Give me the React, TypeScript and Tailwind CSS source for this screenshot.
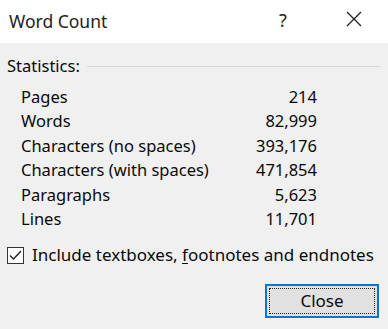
import React from "react";

const rows: [string, string][] = [
  ["Pages", "214"],
  ["Words", "82,999"],
  ["Characters (no spaces)", "393,176"],
  ["Characters (with spaces)", "471,854"],
  ["Paragraphs", "5,623"],
  ["Lines", "11,701"],
];

export default function App() {
  return (
    <div
      className="w-[388px] h-[329px] flex flex-col bg-[#f0f0f0] text-[#0a0a0a] overflow-hidden"
      style={{ fontFamily: '"Noto Sans", "Open Sans", sans-serif' }}
    >
      <div className="h-[43px] bg-white flex items-center relative shrink-0">
        <span className="ml-[9px] text-[17.5px] text-[#222]">Word Count</span>
        <span className="absolute left-[279px] top-[7px] text-[18px] text-[#222]">?</span>
        <svg className="absolute left-[346px] top-[11px]" width="16" height="16" viewBox="0 0 16 16">
          <path d="M1 1 L15 15 M15 1 L1 15" stroke="#222" strokeWidth="1.3" fill="none" />
        </svg>
      </div>
      <div className="flex flex-col">
        <div className="flex items-center h-[20px] mt-[13px] pl-[7px] pr-[8px]">
          <span className="text-[16.5px]">Statistics:</span>
          <div className="flex-1 h-px bg-[#d7d7d7] ml-[7px] mt-[1px]" />
        </div>
        <div className="flex flex-col mt-[9px] pl-[21px] w-[317px]">
          {rows.map(([k, v]) => (
            <div key={k} className="flex justify-between h-[24.5px] items-center text-[16.5px]">
              <span>{k}</span>
              <span>{v}</span>
            </div>
          ))}
        </div>
        <div className="flex items-center h-[24px] mt-[11px] pl-[7px]">
          <div className="w-[17px] h-[17px] border border-[#333] bg-white flex items-center justify-center">
            <svg width="15" height="15" viewBox="0 0 15 15">
              <path d="M2 7.5 L5.5 11 L13 3" stroke="#222" strokeWidth="1.4" fill="none" />
            </svg>
          </div>
          <span className="ml-[8px] text-[17px]">
            Include textboxes, <span className="underline underline-offset-2">f</span>ootnotes and endnotes
          </span>
        </div>
        <div className="flex justify-end mt-[17px] pr-[9px]">
          <div className="w-[114px] h-[34px] border-2 border-[#0078d7] bg-[#e1e1e1] p-[2px]">
            <div className="w-full h-full border border-dotted border-[#222] flex items-center justify-center text-[17px]">
              Close
            </div>
          </div>
        </div>
      </div>
    </div>
  );
}
